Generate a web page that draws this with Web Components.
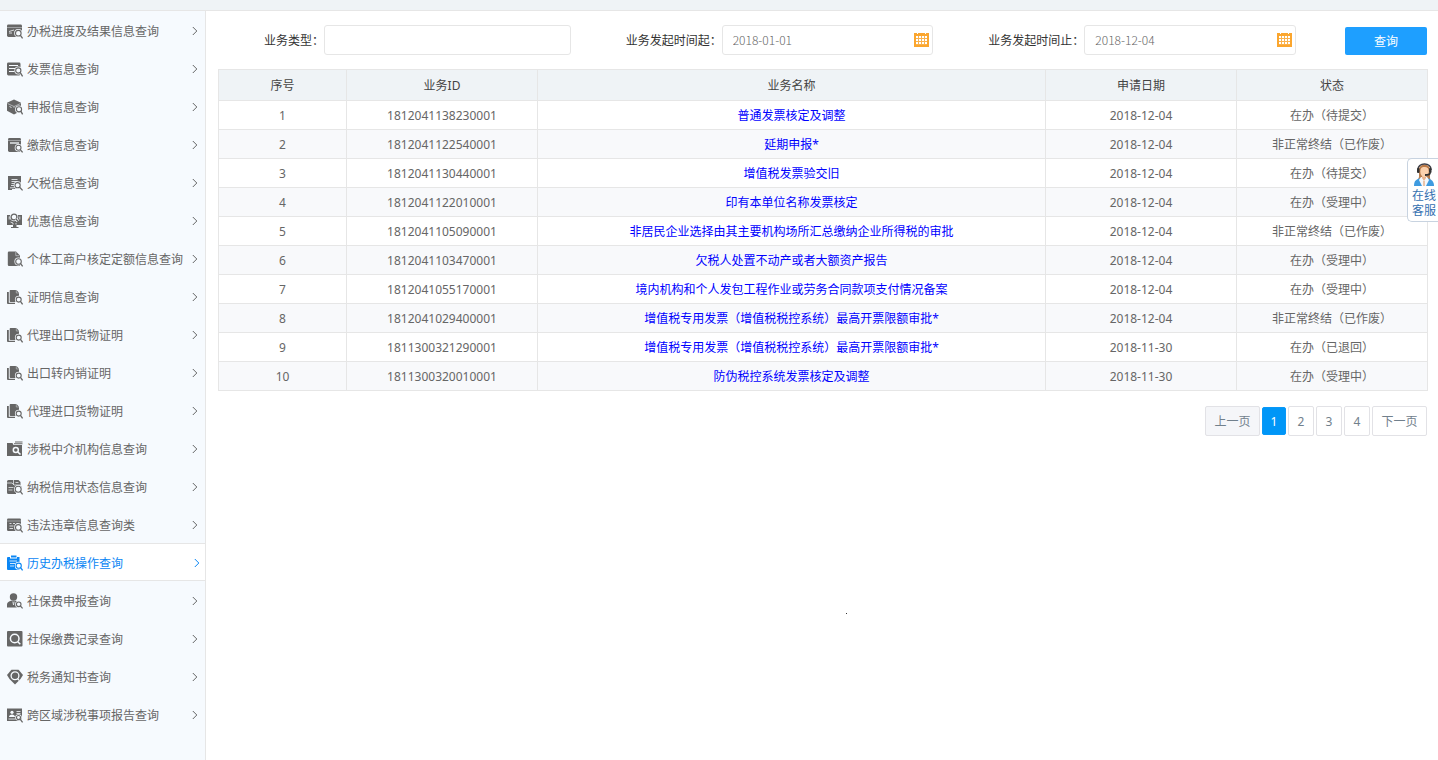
<!DOCTYPE html>
<html lang="zh-CN">
<head>
<meta charset="utf-8">
<title>历史办税操作查询</title>
<style>
  html, body { margin: 0; min-height: 100%; }
  body {
    background: #fff; color: #666;
    font: 12px/16px "Noto Sans", "Noto Sans CJK SC", sans-serif;
  }
</style>
</head>
<body>
<tax-app></tax-app>

<script>
const render = (host, html) => {
  const t = document.createElement('template');
  t.innerHTML = html;
  host.attachShadow({ mode: 'open' }).append(t.content.cloneNode(true));
};

/* Magnifier with a background-coloured halo, shared by most menu icons */
const lens = (cx, cy, r) => {
  const a = cx + r * 0.7, b = cy + r * 0.7;
  const d = `M${a} ${b}L15.6 15.4`;
  return `<circle cx="${cx}" cy="${cy}" r="${r}" fill="var(--bg)" stroke="var(--bg)" stroke-width="2.6"/>
    <path d="${d}" stroke="var(--bg)" stroke-width="2.4"/>
    <circle cx="${cx}" cy="${cy}" r="${r}" fill="none" stroke="currentColor" stroke-width="1.1"/>
    <path d="${d}" stroke="currentColor" stroke-width="1.3"/>`;
};
const cut = (d, w = 0.8) => `<path d="${d}" fill="none" stroke="var(--bg)" stroke-width="${w}"/>`;

const ICONS = {
  progress: `<rect x="0" y="1.5" width="15" height="12.500" rx="1.4"/>${cut('M0 4.500h15', .4)}${cut('M2 8.500l5-1.500M2 10h3')}${lens(11.3, 10.2, 2.8)}`,
  invoice: `<rect x="0" y="1.500" width="13.500" height="13" rx="1.4"/>${cut('M2 4.500h9M2 7.500h6M2 10.500h5.500', 1.1)}${lens(11.3, 9.500, 2.6)}`,
  cube: `<path d="M7 .5l7 3.200v8l-7 3.800-7-3.800v-8z"/>${cut('M.5 4.500L7 7.500l6.500-3M7 7.500V9', .5)}${cut('M2.500 7.500l2 1')}${lens(12, 10.3, 2.6)}`,
  payment: `<rect x="1" y="1" width="13" height="14" rx="1.4"/>${cut('M1 3.500h13', .4)}${cut('M3 6h9', 1.3)}${lens(11.5, 10.8, 2.500)}`,
  arrears: `<path d="M1 1h13v13h-9v1H1z"/>${cut('M4.500 4.500h6M4.500 6.500h6M4.500 8.500h3M4 10.500h3M3 12.800h4')}${lens(10.6, 10.2, 2.6)}`,
  benefit: `<path d="M0 2h15v10H0z"/><path d="M4 15h7.500v-1H9.500v-2H6v2H4z"/>${cut('M2.200 3.500v3M12.800 3.500v3')}
    <circle cx="7" cy="4" r="4.300" fill="var(--bg)"/><circle cx="7" cy="4" r="2.900" fill="none" stroke="currentColor" stroke-width="1.3"/>
    <path d="M9 6l2 2.300" stroke="var(--bg)" stroke-width="3"/><path d="M9 6l2.300 2.600" stroke="currentColor" stroke-width="1.300"/>
    ${cut('M3.500 9l2.500 1v1.500M9 11.500V10')}`,
  household: `<path d="M2 .5h7l4 4V15H2a1.200 1.200 0 0 1-1.200-1.200V1.700A1.200 1.200 0 0 1 2 .5z"/>${cut('M8.800 1v3.700H12.500', .5)}${lens(11.500, 10.500, 2.800)}`,
  copies: `<path d="M0 3h1.800v10.700H8V15H1a1 1 0 0 1-1-1z"/><path d="M4 1h5.500L12 3.700V13H3.500a.8.8 0 0 1-.8-.8V2A1 1 0 0 1 4 1z"/>
    ${cut('M9.300 1v3H12', .4)}${lens(11.7, 10.6, 2.5)}`,
  folder: `<path d="M0 2h5.500l1 2H15v11H0z"/><path d="M8 .5h7.500v1H8zM7 2.300h8.500v1H7z"/>
    <circle cx="8.800" cy="9" r="2.500" fill="none" stroke="var(--bg)" stroke-width="1.500"/>${cut('M10.800 11l2.700 2.500', 1.700)}`,
  credit: `<path d="M1.500 1h4.800v4.500l1.200.5h5L15 8v6H9v1H1.500A1.500 1.500 0 0 1 0 13.500V2.500A1.500 1.500 0 0 1 1.500 1z"/><path d="M7 1h4.500L13.500 3v3H7z"/>
    ${cut('M0 4h5l2 2h6M1.500 8.500h5M1.500 11h4M8.500 3.500h3', .7)}${lens(11.2, 10.3, 3)}`,
  violation: `<rect x="0" y="1.500" width="14" height="12.500" rx="1.200"/>${cut('M0 4h14', .4)}${cut('M2.500 6.500h2M6 6.500h2M9.500 6.500h2M2.500 9h4M2.500 11.500h3.500')}${lens(11.3, 10.4, 2.8)}`,
  history: `<path d="M1 2h2v1.500h7V2h2.500v13H1a1 1 0 0 1-1-1V3a1 1 0 0 1 1-1z"/><path d="M4 .5h5.500v2H4z"/>${cut('M2.500 6h7.500M3 8.500h5M3 11h4')}${lens(11.700, 10.700, 2.600)}`,
  person: `<circle cx="6.500" cy="4" r="3.700"/><path d="M0 14.500V12c0-3 2.500-3.700 4-4.200h5c1.500.5 4 1.200 4 4.200v2.500z"/>${cut('M5.800 8.500L6.500 12l.7-3.500', .7)}${lens(11.700, 11.300, 2.300)}`,
  record: `<rect x="0" y="0" width="15.500" height="15.500" rx="1"/><circle cx="7.700" cy="7.500" r="4.300" fill="none" stroke="var(--bg)" stroke-width="1.500"/>${cut('M10.800 10.800l2.500 2.500', 1.500)}`,
  notice: `<path d="M4.500.8h7L13.500 3 16 6l-2.500 4-2.500 2.500-3 3-3-3L2.500 10 0 6l2.500-3z"/><circle cx="8" cy="6.800" r="3.900" fill="none" stroke="var(--bg)" stroke-width="1.300"/>${cut('M10.500 9.500l1.500 1.800', 1.200)}`,
  region: `<rect x="0" y="1.500" width="15" height="12.500"/><circle cx="5" cy="5.300" r="1.600" fill="var(--bg)"/><path d="M2 10c0-3.500 6-3.500 6 0z" fill="var(--bg)"/>
    ${cut('M9.500 4.500h4M9.500 6.500h4M1.500 12h7')}${lens(11.5, 10.5, 2)}`
};

const MENU = [
  ['办税进度及结果信息查询', 'progress'], ['发票信息查询', 'invoice'], ['申报信息查询', 'cube'],
  ['缴款信息查询', 'payment'], ['欠税信息查询', 'arrears'], ['优惠信息查询', 'benefit'],
  ['个体工商户核定定额信息查询', 'household'], ['证明信息查询', 'copies'], ['代理出口货物证明', 'copies'],
  ['出口转内销证明', 'copies'], ['代理进口货物证明', 'copies'], ['涉税中介机构信息查询', 'folder'],
  ['纳税信用状态信息查询', 'credit'], ['违法违章信息查询类', 'violation'], ['历史办税操作查询', 'history'],
  ['社保费申报查询', 'person'], ['社保缴费记录查询', 'record'], ['税务通知书查询', 'notice'],
  ['跨区域涉税事项报告查询', 'region']
];

const ROWS = [
  ['1812041138230001', '普通发票核定及调整', '2018-12-04', '在办（待提交）'],
  ['1812041122540001', '延期申报*', '2018-12-04', '非正常终结（已作废）'],
  ['1812041130440001', '增值税发票验交旧', '2018-12-04', '在办（待提交）'],
  ['1812041122010001', '印有本单位名称发票核定', '2018-12-04', '在办（受理中）'],
  ['1812041105090001', '非居民企业选择由其主要机构场所汇总缴纳企业所得税的审批', '2018-12-04', '非正常终结（已作废）'],
  ['1812041103470001', '欠税人处置不动产或者大额资产报告', '2018-12-04', '在办（受理中）'],
  ['1812041055170001', '境内机构和个人发包工程作业或劳务合同款项支付情况备案', '2018-12-04', '在办（受理中）'],
  ['1812041029400001', '增值税专用发票（增值税税控系统）最高开票限额审批*', '2018-12-04', '非正常终结（已作废）'],
  ['1811300321290001', '增值税专用发票（增值税税控系统）最高开票限额审批*', '2018-11-30', '在办（已退回）'],
  ['1811300320010001', '防伪税控系统发票核定及调整', '2018-11-30', '在办（受理中）']
];

customElements.define('nav-item', class extends HTMLElement {
  connectedCallback() {
    if (this.shadowRoot) return;
    render(this, `
      <style>
        :host { display: block; --bg: #f6fafe; }
        :host([current]) { --bg: #fff; }
        a {
          display: flex; align-items: center; gap: 4px; box-sizing: border-box; height: 38px;
          padding: 2px 7px 0; border: solid transparent; border-width: 1px 0;
          color: #666; text-decoration: none; white-space: nowrap;
        }
        :host([current]) a { background: #fff; border-color: #e6e6e6; color: #0b86f4; padding-right: 5px; }
        .icon { width: 16px; height: 16px; flex: none; fill: currentColor; overflow: visible; }
        span { flex: 1; padding-top: 2px; }
        .arrow { width: 6px; height: 10px; flex: none; fill: none; stroke: currentColor; }
      </style>
      <a href="#">
        <svg class="icon" viewBox="0 0 16 16" aria-hidden="true">${ICONS[this.getAttribute('icon')]}</svg>
        <span><slot></slot></span>
        <svg class="arrow" viewBox="0 0 6 10" aria-hidden="true"><path d="M.8 1L4.800 5 .8 9"/></svg>
      </a>`);
    if (this.hasAttribute('current')) this.shadowRoot.querySelector('a').setAttribute('aria-current', 'page');
  }
});

customElements.define('side-nav', class extends HTMLElement {
  constructor() {
    super();
    render(this, `
      <style>
        :host { display: block; box-sizing: border-box; background: #f6fafe; border-right: 1px solid #e6e6e6; }
      </style>
      <nav aria-label="查询菜单">${MENU.map(([text, icon]) =>
        `<nav-item icon="${icon}"${icon === 'history' ? ' current' : ''}>${text}</nav-item>`).join('')}</nav>`);
  }
});

customElements.define('form-field', class extends HTMLElement {
  connectedCallback() {
    if (this.shadowRoot) return;
    const date = this.hasAttribute('date');
    render(this, `
      <style>
        :host { display: flex; align-items: center; color: #333; }
        label { flex: none; width: 116px; padding-top: 2px; text-align: right; white-space: nowrap; }
        :host([date]) label { width: 151px; }
        .box { position: relative; flex: 1; min-width: 0; }
        input {
          display: block; box-sizing: border-box; width: 100%; height: 30px; padding: 0 24px 2px 10px;
          border: 1px solid #e6e6e6; border-radius: 3px; background: #fff; outline: 0;
          font: 300 12px/16px "Noto Sans CJK SC", sans-serif; color: #666;
        }
        button { position: absolute; right: 4px; top: 8px; width: 15px; height: 15px; padding: 0; border: 0; background: none; }
        svg { display: block; }
      </style>
      <label for="f">${this.getAttribute('label')}</label>
      <div class="box">
        <input id="f" type="text" value="${this.getAttribute('value') || ''}">
        ${date ? `<button type="button" aria-label="选择日期"><svg width="15" height="15" viewBox="0 0 15 15">
          <path fill="#fba62e" d="M0 0h15v14H0z"/>
          <path fill="#fff" d="M3 0h1v1H3zM11 0h1v1h-1zM2 3h11v9H2z"/>
          <path fill="none" stroke="#fbb24c" d="M4.500 3v9M7.500 3v9M10.500 3v9M2 5.500h11M2 8.500h11M2 11.500h11"/>
        </svg></button>` : ''}
      </div>`);
  }
});

customElements.define('search-form', class extends HTMLElement {
  constructor() {
    super();
    render(this, `
      <style>
        :host { display: block; }
        form { display: grid; grid-template-columns: 3fr 3fr 3fr 131px; align-items: end; }
        button {
          justify-self: end; width: 82px; height: 28px; padding: 2px 0 0; border: 0; border-radius: 2px;
          background: #1e9fff; color: #fff; font: inherit;
        }
      </style>
      <form>
        <form-field label="业务类型："></form-field>
        <form-field date label="业务发起时间起：" value="2018-01-01"></form-field>
        <form-field date label="业务发起时间止：" value="2018-12-04"></form-field>
        <button type="button">查询</button>
      </form>`);
  }
});

customElements.define('record-table', class extends HTMLElement {
  constructor() {
    super();
    render(this, `
      <style>
        :host { display: block; }
        table { width: 100%; table-layout: fixed; border-collapse: collapse; text-align: center; }
        th, td { box-sizing: border-box; height: 29px; padding: 2px 0 0; border: 1px solid #e6e6e6; font-weight: 400; }
        th { height: 31px; background: #eff3f6; color: #444; }
        tbody tr:nth-child(even) { background: #f8f9fb; }
        a { color: #00f; text-decoration: none; }
        .no { width: 128px; } .mid { width: 15.8%; }
      </style>
      <table>
        <colgroup><col class="no"><col class="mid"><col><col class="mid"><col class="mid"></colgroup>
        <thead><tr><th>序号</th><th>业务ID</th><th>业务名称</th><th>申请日期</th><th>状态</th></tr></thead>
        <tbody>${ROWS.map(([id, name, date, state], i) =>
          `<tr><td>${i + 1}</td><td>${id}</td><td><a href="#">${name}</a></td><td>${date}</td><td>${state}</td></tr>`).join('')}</tbody>
      </table>`);
  }
});

customElements.define('page-nav', class extends HTMLElement {
  constructor() {
    super();
    render(this, `
      <style>
        :host { display: block; }
        nav { display: flex; justify-content: flex-end; align-items: center; gap: 2px; }
        button {
          box-sizing: border-box; width: 26px; height: 30px; padding: 2px 0 0; border: 1px solid #e2e2e6;
          border-radius: 2px; background: #fff; color: #71808c; font: inherit;
        }
        .wide { width: 55px; }
        button:disabled { background: #f5f6f9; }
        [aria-current] { width: 24px; height: 28px; border-color: #0898f8; background: #0096f7; color: #fff; }
      </style>
      <nav aria-label="分页">
        <button class="wide" disabled>上一页</button><button aria-current="page">1</button><button>2</button><button>3</button><button>4</button><button class="wide">下一页</button>
      </nav>`);
  }
});

customElements.define('service-tab', class extends HTMLElement {
  constructor() {
    super();
    render(this, `
      <style>
        :host { position: fixed; right: 0; top: 158px; }
        a {
          display: block; box-sizing: border-box; width: 31px; height: 64px; padding: 4px 0 0 4px; overflow: hidden;
          border: 1px solid #c8d3e0; border-right: 0; border-radius: 5px 0 0 5px; background: #fff;
          color: #3470b0; text-decoration: none; font: 12px/15px "Noto Sans CJK SC", sans-serif;
        }
        svg { display: block; margin-left: 2px; }
        span { display: block; width: 26px; }
      </style>
      <a href="#">
        <svg width="20" height="24" viewBox="0 0 20 24" aria-hidden="true">
          <path d="M5 7c0-7 11-7 11 0v8l1 4H3l2-5z" fill="#b77d4e"/>
          <path d="M0 23c0-6 3-7 7-8h6c4 1 7 3 7 8z" fill="#3e9be0"/>
          <path d="M7 14l-2 3 3 6h4l3-6-2-3z" fill="#f5f8fb"/>
          <path d="M8 12h4v3l-2 3-2-3z" fill="#e9b48e"/>
          <ellipse cx="10.500" cy="8.500" rx="4.200" ry="5.500" fill="#fbd1ad"/>
          <path d="M5 8c1-4 4-4 6-4s4 1 5 4c0-8-11-8-11 0z" fill="#ba7a47"/>
          <path d="M4 7C3-1 18-1 17 7" fill="none" stroke="#3c3c44" stroke-width="1.600"/>
          <rect x="3" y="5" width="2.500" height="5" rx="1" fill="#333"/><rect x="15" y="5" width="2.500" height="5" rx="1" fill="#333"/>
          <path d="M16 10c0 2-3 2-5 2" fill="none" stroke="#333" stroke-width="1.800"/>
          <path d="M10 18v5" stroke="#e9b48e" stroke-width="1.500"/>
        </svg>
        <span>在线客服</span>
      </a>`);
  }
});

customElements.define('tax-app', class extends HTMLElement {
  constructor() {
    super();
    render(this, `
      <style>
        :host { display: flex; flex-direction: column; min-height: 100vh; }
        header { height: 10px; background: #eff3f6; border-bottom: 1px solid #e6e6e6; }
        .body { flex: 1; display: grid; grid-template-columns: 206px minmax(0, 1fr); }
        main { position: relative; padding: 14px 10px 0 12px; }
        search-form { margin: 0 1px 14px -10px; }
        page-nav { margin: 15px 1px 0 0; }
        .dot { position: absolute; left: calc(50% + 24px); top: 602px; width: 1px; height: 1px; background: #333; }
      </style>
      <header></header>
      <div class="body">
        <side-nav></side-nav>
        <main>
          <search-form></search-form>
          <record-table></record-table>
          <page-nav></page-nav>
          <i class="dot"></i>
        </main>
      </div>
      <service-tab></service-tab>`);
  }
});
</script>
</body>
</html>
